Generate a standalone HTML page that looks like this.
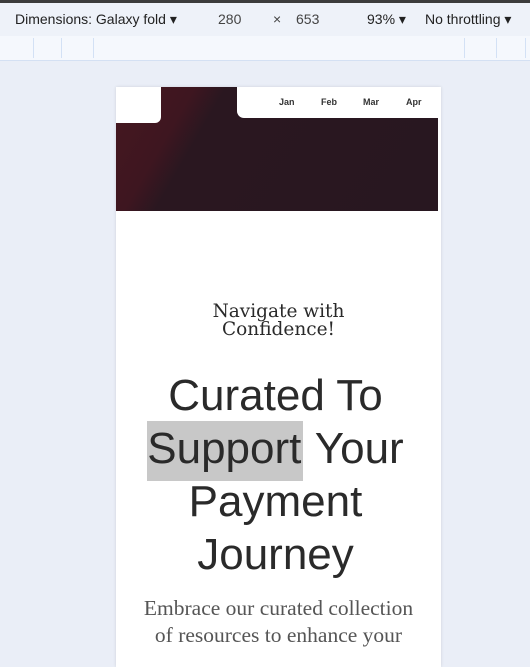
<!DOCTYPE html>
<html><head><style>
*{margin:0;padding:0;box-sizing:border-box}
body{width:530px;height:652px;overflow:hidden;background:#eaeef7;font-family:"Liberation Sans",sans-serif;position:relative}
.topbar{position:absolute;left:0;top:0;width:530px;height:3px;background:#3c3c3c}
.tool{position:absolute;left:0;top:3px;width:530px;height:33px;background:#eef2f9;font-size:14px;color:#222}
.tool span{position:absolute;top:8px}
.ruler{position:absolute;left:0;top:36px;width:530px;height:25px;background:#f5f8fd;border-bottom:1px solid #d4e0f3}
.ruler i{position:absolute;top:2px;width:1px;height:20px;background:#d3e1f5}
.page{position:absolute;left:116px;top:87px;width:325px;height:580px;background:#fff;box-shadow:0 0 3px rgba(0,0,0,.12)}
.dark{position:absolute;left:0;top:0;width:322px;height:124px;background:linear-gradient(120deg,#461820 0%,#3e1620 20%,#2a1720 28%,#281720 100%)}
.w1{position:absolute;left:0;top:0;width:45px;height:36px;background:#fff;border-bottom-right-radius:6px}
.w2{position:absolute;left:121px;top:0;width:201px;height:31px;background:#fff;border-bottom-left-radius:7px;font-size:9px;font-weight:bold;color:#333}
.w2 span{position:absolute;top:10px}
.sub{position:absolute;left:0;width:325px;top:216px;text-align:center;font-family:"DejaVu Serif",serif;font-size:18.5px;line-height:18px;color:#2a2a2a}
.h{position:absolute;left:-3px;width:325px;top:282px;text-align:center;font-size:44px;line-height:53px;color:#2a2a2a}
.hl{background:#c8c8c8;padding:3px 2px 8px 0}
.p{position:absolute;left:0;width:325px;top:508px;text-align:center;font-family:"Liberation Serif",serif;font-size:21.5px;line-height:27px;color:#555}
</style></head><body>
<div class="topbar"></div>
<div class="tool">
<span style="left:15px">Dimensions: Galaxy fold ▾</span>
<span style="left:218px;color:#444">280</span>
<span style="left:273px;color:#444">×</span>
<span style="left:296px;color:#444">653</span>
<span style="left:367px">93% ▾</span>
<span style="left:425px">No throttling ▾</span>
</div>
<div class="ruler"><i style="left:33px"></i><i style="left:61px"></i><i style="left:93px"></i><i style="left:464px"></i><i style="left:496px"></i><i style="left:525px"></i></div>
<div class="page">
<div class="dark"></div>
<div class="w1"></div>
<div class="w2"><span style="left:42px">Jan</span><span style="left:84px">Feb</span><span style="left:126px">Mar</span><span style="left:169px">Apr</span></div>
<div class="sub">Navigate with<br>Confidence!</div>
<div class="h">Curated To<br><span class="hl">Support</span> Your<br>Payment<br>Journey</div>
<div class="p">Embrace our curated collection<br>of resources to enhance your</div>
</div>
</body></html>
